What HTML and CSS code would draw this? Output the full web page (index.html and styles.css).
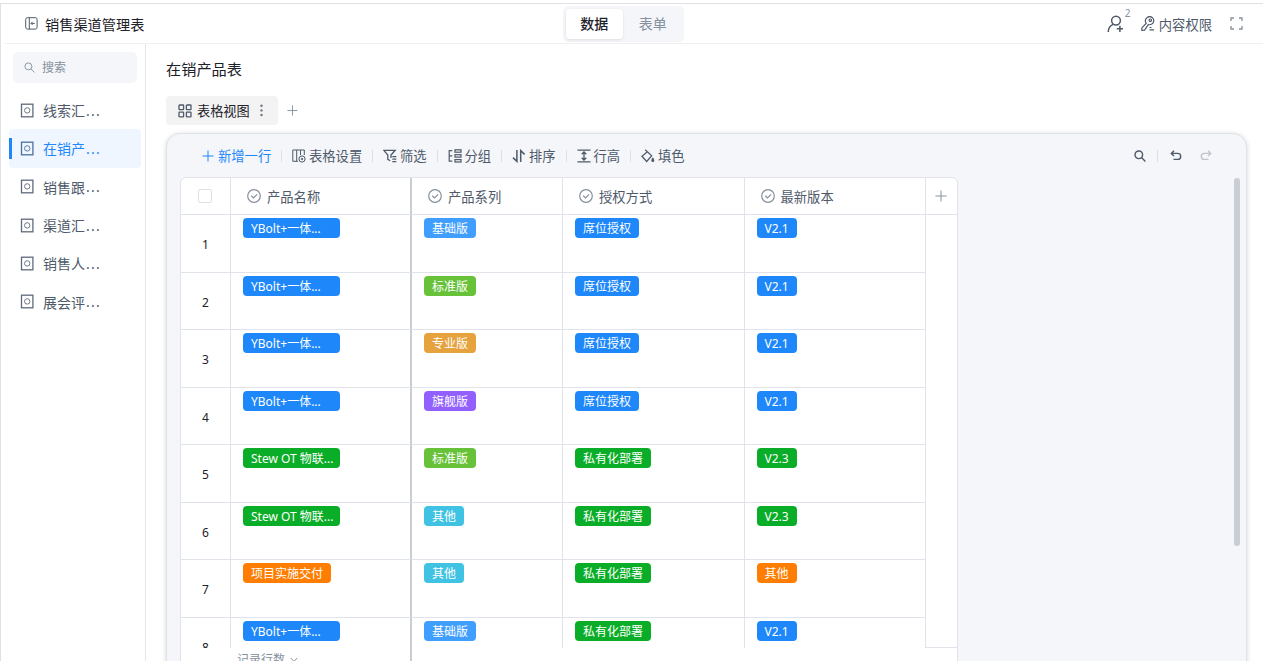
FILE: index.html
```html
<!DOCTYPE html>
<html lang="zh-CN">
<head>
    <meta charset="UTF-8">
    <meta name="viewport" content="width=device-width, initial-scale=1.0">
    <title>销售渠道管理表</title>
    <link rel="stylesheet" href="styles.css">
</head>
<body>

    <!-- Shared icons -->
    <svg class="icon-defs">
        <symbol id="i-form" viewBox="0 0 14 15">
            <rect x="1.5" y="1.2" width="11.4" height="12.6" stroke-width="1.3"/>
            <circle cx="7.2" cy="7.4" r="2.7" stroke-width=".9"/>
        </symbol>
        <symbol id="i-check" viewBox="0 0 14 14">
            <circle cx="7" cy="7" r="6.3" stroke-width="1.2"/>
            <path d="M4.2 6.8l2.3 2.2 3.6-3.7" stroke-width="1.2"/>
        </symbol>
        <symbol id="i-search" viewBox="0 0 12 12">
            <circle cx="4.8" cy="4.8" r="3.8"/>
            <path d="M7.5 7.5l3.9 3.9"/>
        </symbol>
        <symbol id="i-plus" viewBox="0 0 12 12">
            <path d="M6 .5v11M.5 6h11"/>
        </symbol>
    </svg>

    <div class="app">
        <header class="topbar">
            <div class="topbar-left">
                <svg class="icon" width="13" height="13" viewBox="0 0 13 13">
                    <rect x=".7" y=".7" width="11.4" height="11.4" rx="1.8"/>
                    <path d="M4.3 .7v11.4M9.7 6.4H6.2M7.6 4.8L6 6.4l1.6 1.6"/>
                </svg>
                <span class="app-title">销售渠道管理表</span>
            </div>
            <nav class="switch">
                <span class="switch-item active">数据</span>
                <span class="switch-item">表单</span>
            </nav>
            <div class="topbar-right">
                <div class="members">
                    <svg class="icon" width="18" height="18" viewBox="0 0 18 18" stroke-width="1.5">
                        <circle cx="9" cy="5.6" r="4.4"/>
                        <path d="M1.2 17c.2-3.8 2-6.4 5-7.6M12.9 10.7v6.2M9.8 13.8H16"/>
                    </svg>
                    <span class="member-count">2</span>
                </div>
                <svg class="icon" width="14" height="15" viewBox="0 0 14 15" stroke-width="1.2">
                    <path d="M5.2 7.3C3.8 5 4.5 2.6 6.3 1.4c2-1.3 4.5-.7 5.8 1.1 1.2 1.9.6 4.5-1.3 5.6-1.1.7-2.3.8-3.4.4L3.6 14.2.8 14.3l.1-2.4z"/>
                    <circle cx="9.3" cy="4.2" r="1.2"/>
                    <path d="M8.5 11.5h2M8.5 13.9h4.5"/>
                </svg>
                <span class="perm">内容权限</span>
                <svg class="icon muted" width="13" height="13" viewBox="0 0 13 13" stroke-width="1.3">
                    <path d="M1 4V1h3M9 1h3v3M12 9v3H9M4 12H1V9"/>
                </svg>
            </div>
        </header>

        <div class="body">
            <aside class="sidebar">
                <div class="search">
                    <svg class="icon" width="11" height="11"><use href="#i-search"/></svg>
                    <span>搜索</span>
                </div>
                <ul class="menu">
                    <li><svg class="icon" width="14" height="15"><use href="#i-form"/></svg>线索汇<i>...</i></li>
                    <li class="active"><svg class="icon" width="14" height="15"><use href="#i-form"/></svg>在销产<i>...</i></li>
                    <li><svg class="icon" width="14" height="15"><use href="#i-form"/></svg>销售跟<i>...</i></li>
                    <li><svg class="icon" width="14" height="15"><use href="#i-form"/></svg>渠道汇<i>...</i></li>
                    <li><svg class="icon" width="14" height="15"><use href="#i-form"/></svg>销售人<i>...</i></li>
                    <li><svg class="icon" width="14" height="15"><use href="#i-form"/></svg>展会评<i>...</i></li>
                </ul>
            </aside>

            <main class="main">
                <h1>在销产品表</h1>
                <div class="views">
                    <div class="view-tab">
                        <svg class="icon" width="14" height="14" viewBox="0 0 14 14" stroke-width="1.3">
                            <rect x="1" y="1" width="4.6" height="4.6" rx=".6"/>
                            <rect x="8.4" y="1" width="4.6" height="4.6" rx=".6"/>
                            <rect x="1" y="8.2" width="4.6" height="4.6" rx=".6"/>
                            <rect x="8.4" y="8.2" width="4.6" height="4.6" rx=".6"/>
                        </svg>
                        <span>表格视图</span>
                        <svg class="dots" width="3" height="13" viewBox="0 0 3 13">
                            <circle cx="1.5" cy="1.8" r="1.2"/>
                            <circle cx="1.5" cy="6.4" r="1.2"/>
                            <circle cx="1.5" cy="11" r="1.2"/>
                        </svg>
                    </div>
                    <svg class="icon muted" width="11" height="11"><use href="#i-plus"/></svg>
                </div>

                <section class="panel">
                    <div class="toolbar">
                        <div class="tool add">
                            <svg class="icon" width="12" height="12"><use href="#i-plus"/></svg>新增一行
                        </div>
                        <div class="tool settings">
                            <svg class="icon" width="14" height="14" viewBox="0 0 14 14">
                                <path d="M6 12.3H.8V1h11.5v5M4.7 1v11.3M8.5 1v5"/>
                                <circle cx="10" cy="10" r="3.1"/>
                                <circle cx="10" cy="10" r=".8"/>
                            </svg>表格设置
                        </div>
                        <div class="tool filter">
                            <svg class="icon" width="14" height="14" viewBox="0 0 14 14" stroke-width="1.3">
                                <path d="M7.2 11.8L4.8 10.3V6.1L.8 1.3h11.4L8 6.1V9M9.3 7.6h4M9.3 10.1h4M9.3 12.6h4"/>
                            </svg>筛选
                        </div>
                        <div class="tool group">
                            <svg class="icon" width="14" height="14" viewBox="0 0 14 14" stroke-width="1.2">
                                <path d="M4.3 1.6H1.2v10.6h3.1M1.2 6.9h3.1"/>
                                <rect x="7" y=".8" width="6" height="2.4"/>
                                <rect x="7" y="5.7" width="6" height="2.4"/>
                                <rect x="7" y="10.6" width="6" height="2.4"/>
                            </svg>分组
                        </div>
                        <div class="tool sort">
                            <svg class="icon" width="14" height="14" viewBox="0 0 14 14" stroke-width="1.5">
                                <path d="M4.9 1v11.4L1 8.6M8.7 13V1.6l3.9 3.8"/>
                            </svg>排序
                        </div>
                        <div class="tool height">
                            <svg class="icon" width="14" height="14" viewBox="0 0 14 14" stroke-width="1.3">
                                <path d="M.5 1.1h13M.5 12.9h13M7 3.5v7M4.7 5.3L7 3l2.3 2.3M4.7 8.7L7 11l2.3-2.3"/>
                            </svg>行高
                        </div>
                        <div class="tool fill">
                            <svg class="icon" width="14" height="14" viewBox="0 0 14 14" stroke-width="1.2">
                                <path d="M4.2.8l6.5 5.9-5 5.8L.9 7.2 6.4 2.7"/>
                                <path class="solid" d="M11.8 8.3c.9 1.5 1.5 2.4 1.5 3.2a1.5 1.5 0 0 1-3 0c0-.8.6-1.7 1.5-3.2z"/>
                            </svg>填色
                        </div>
                        <div class="actions">
                            <svg class="icon" width="12" height="12" stroke-width="1.4"><use href="#i-search"/></svg>
                            <span class="sep"></span>
                            <svg class="icon" width="12" height="11" viewBox="0 0 12 11" stroke-width="1.4">
                                <path d="M4 .8L1.3 3.4 4 6M1.5 3.4h6.2a3 3 0 0 1 0 6H3.5"/>
                            </svg>
                            <svg class="icon disabled" width="12" height="11" viewBox="0 0 12 11" stroke-width="1.4">
                                <path d="M8 .8l2.7 2.6L8 6M10.5 3.4H4.3a3 3 0 0 0 0 6h4.2"/>
                            </svg>
                        </div>
                    </div>

                    <div class="table">
                        <div class="row head">
                            <div class="cell no"><span class="checkbox"></span></div>
                            <div class="cell name"><svg class="icon" width="14" height="14"><use href="#i-check"/></svg>产品名称</div>
                            <div class="cell"><svg class="icon" width="14" height="14"><use href="#i-check"/></svg>产品系列</div>
                            <div class="cell"><svg class="icon" width="14" height="14"><use href="#i-check"/></svg>授权方式</div>
                            <div class="cell"><svg class="icon" width="14" height="14"><use href="#i-check"/></svg>最新版本</div>
                            <div class="cell plus"><svg class="icon" width="12" height="12"><use href="#i-plus"/></svg></div>
                        </div>
                        <div class="rows">
                            <div class="row">
                                <div class="cell no">1</div>
                                <div class="cell name"><span class="tag wide blue">YBolt+一体...</span></div>
                                <div class="cell"><span class="tag light-blue">基础版</span></div>
                                <div class="cell"><span class="tag blue">席位授权</span></div>
                                <div class="cell"><span class="tag blue">V2.1</span></div>
                                <div class="cell plus"></div>
                            </div>
                            <div class="row">
                                <div class="cell no">2</div>
                                <div class="cell name"><span class="tag wide blue">YBolt+一体...</span></div>
                                <div class="cell"><span class="tag lime">标准版</span></div>
                                <div class="cell"><span class="tag blue">席位授权</span></div>
                                <div class="cell"><span class="tag blue">V2.1</span></div>
                                <div class="cell plus"></div>
                            </div>
                            <div class="row">
                                <div class="cell no">3</div>
                                <div class="cell name"><span class="tag wide blue">YBolt+一体...</span></div>
                                <div class="cell"><span class="tag amber">专业版</span></div>
                                <div class="cell"><span class="tag blue">席位授权</span></div>
                                <div class="cell"><span class="tag blue">V2.1</span></div>
                                <div class="cell plus"></div>
                            </div>
                            <div class="row">
                                <div class="cell no">4</div>
                                <div class="cell name"><span class="tag wide blue">YBolt+一体...</span></div>
                                <div class="cell"><span class="tag purple">旗舰版</span></div>
                                <div class="cell"><span class="tag blue">席位授权</span></div>
                                <div class="cell"><span class="tag blue">V2.1</span></div>
                                <div class="cell plus"></div>
                            </div>
                            <div class="row">
                                <div class="cell no">5</div>
                                <div class="cell name"><span class="tag wide green">Stew OT 物联...</span></div>
                                <div class="cell"><span class="tag lime">标准版</span></div>
                                <div class="cell"><span class="tag green">私有化部署</span></div>
                                <div class="cell"><span class="tag green">V2.3</span></div>
                                <div class="cell plus"></div>
                            </div>
                            <div class="row">
                                <div class="cell no">6</div>
                                <div class="cell name"><span class="tag wide green">Stew OT 物联...</span></div>
                                <div class="cell"><span class="tag cyan">其他</span></div>
                                <div class="cell"><span class="tag green">私有化部署</span></div>
                                <div class="cell"><span class="tag green">V2.3</span></div>
                                <div class="cell plus"></div>
                            </div>
                            <div class="row">
                                <div class="cell no">7</div>
                                <div class="cell name"><span class="tag orange">项目实施交付</span></div>
                                <div class="cell"><span class="tag cyan">其他</span></div>
                                <div class="cell"><span class="tag green">私有化部署</span></div>
                                <div class="cell"><span class="tag orange">其他</span></div>
                                <div class="cell plus"></div>
                            </div>
                            <div class="row">
                                <div class="cell no">8</div>
                                <div class="cell name"><span class="tag wide blue">YBolt+一体...</span></div>
                                <div class="cell"><span class="tag light-blue">基础版</span></div>
                                <div class="cell"><span class="tag green">私有化部署</span></div>
                                <div class="cell"><span class="tag blue">V2.1</span></div>
                                <div class="cell plus"></div>
                            </div>
                        </div>
                        <div class="row foot">
                            <div class="cell no"></div>
                            <div class="cell name">记录行数
                                <svg class="icon" width="8" height="6" viewBox="0 0 8 6"><path d="M.8 1L4 4.5 7.2 1"/></svg>
                            </div>
                            <div class="cell"></div>
                            <div class="cell"></div>
                            <div class="cell"></div>
                            <div class="cell plus"></div>
                        </div>
                    </div>
                    <div class="scrollbar"></div>
                </section>
            </main>
        </div>
    </div>

</body>
</html>
```
FILE: styles.css
```css
/* General Reset */
* {
    margin: 0;
    padding: 0;
    box-sizing: border-box;
}

body {
    font-family: 'Noto Sans', 'Noto Sans CJK SC', sans-serif;
    font-size: 13.3px;
    color: #4e5969;
    background-color: #fff;
    height: 100vh;
    padding-top: 3px;
    overflow: hidden;
}

.icon-defs {
    display: none;
}

.icon {
    fill: none;
    stroke: currentColor;
    flex: none;
}

.icon .solid {
    fill: currentColor;
    stroke: none;
}

.muted {
    color: #86909c;
}

.app {
    height: 658px;
    border-top: 1px solid #e0e1e6;
    border-left: 1px solid #e0e1e6;
    display: flex;
    flex-direction: column;
}

/* Top bar */
.topbar {
    height: 40px;
    flex: none;
    margin-left: 4px;
    border-bottom: 1px solid #eff0f2;
    display: grid;
    grid-template-columns: 560px 119px 1fr;
}

.topbar-left {
    display: flex;
    align-items: center;
    gap: 7px;
    padding-left: 20px;
}

.app-title {
    font-size: 14.2px;
    color: #1d2129;
}

.switch {
    height: 36px;
    margin: 2px 0 0 -2px;
    width: 121px;
    padding: 3px;
    background-color: #f4f6fa;
    border-radius: 5px;
    display: flex;
}

.switch-item {
    width: 57px;
    line-height: 30px;
    font-size: 14px;
    text-align: center;
    color: #86909c;
}

.switch-item.active {
    color: #1d2129;
    font-weight: 500;
    background-color: #fff;
    border-radius: 4px;
    box-shadow: 0 1px 3px rgba(0, 0, 0, 0.1);
    margin-right: 2px;
}

.topbar-right {
    display: flex;
    align-items: center;
    justify-content: flex-end;
    padding-right: 20px;
}

.members {
    display: flex;
    width: 34px;
}

.member-count {
    font-size: 10px;
    line-height: 12px;
    color: #86909c;
    margin-top: -8px;
}

.perm {
    margin: 0 18px 0 4px;
    padding-top: 1px;
}

.body {
    display: flex;
    flex: 1;
    min-height: 0;
}

/* Sidebar */
.sidebar {
    width: 145px;
    flex: none;
    border-right: 1px solid #e5e6eb;
    padding: 8px 4px 0 8px;
}

.search {
    height: 31px;
    width: 124px;
    margin-left: 4px;
    padding: 0 0 1px 11px;
    background-color: #f4f6fa;
    border-radius: 5px;
    display: flex;
    align-items: center;
    gap: 7px;
    font-size: 12px;
    color: #86909c;
}

.menu {
    list-style: none;
    margin-top: 8px;
}

.menu li {
    height: 38.3px;
    display: flex;
    align-items: center;
    padding-left: 11px;
    font-size: 14px;
    border-radius: 4px;
}

.menu i {
    font-style: normal;
    letter-spacing: 1.2px;
    margin-left: 1px;
}

.menu .icon {
    margin-right: 9px;
    color: #5f6b7c;
}

.menu .active {
    color: #1e87fa;
    background: linear-gradient(#1e87fa, #1e87fa) 0 50% / 3px 21px no-repeat #eff6ff;
}

.menu .active .icon {
    color: #4a709e;
}

/* Main area */
.main {
    flex: 1;
    padding: 13px 16px 0 20px;
    display: flex;
    flex-direction: column;
    min-width: 0;
    overflow: hidden;
}

h1 {
    font-size: 15.2px;
    font-weight: 400;
    line-height: 24px;
    color: #1d2129;
}

.views {
    display: flex;
    align-items: center;
    gap: 9px;
    margin: 15px 0 8px;
}

.view-tab {
    height: 29px;
    width: 112px;
    padding-left: 12px;
    background-color: #f3f3f3;
    border-radius: 4px;
    display: flex;
    align-items: center;
    font-size: 13.2px;
    color: #1d2129;
}

.view-tab .icon {
    color: #4e5969;
    margin-right: 5px;
}

.dots {
    fill: #6b7583;
    margin-left: 10px;
}

.panel {
    position: relative;
    height: 560px;
    flex: none;
    padding: 0 13px;
    background-color: #f4f6fa;
    border: 1px solid #dfe2e8;
    border-radius: 14px;
    box-shadow: 0 1px 5px rgba(0, 0, 0, 0.16);
}

/* Toolbar */
.toolbar {
    height: 43px;
    display: flex;
    align-items: center;
    padding-left: 22px;
}

.tool {
    display: flex;
    align-items: center;
    gap: 3px;
    white-space: nowrap;
}

.tool + .tool::before {
    content: '';
    width: 1px;
    height: 12px;
    margin-right: 7px;
    background-color: #dcdfe5;
}

.add {
    width: 79px;
    gap: 4px;
    color: #1e87fa;
}

.settings {
    width: 91px;
}

.filter,
.group,
.sort,
.height {
    width: 64.5px;
}

.actions {
    display: flex;
    align-items: center;
    margin-left: auto;
    padding-right: 21.5px;
}

.sep {
    width: 1px;
    height: 12px;
    margin: 0 12px 0 11px;
    background-color: #dcdfe5;
}

.disabled {
    color: #c0c4cc;
    margin-left: 18px;
}

/* Table */
.table {
    width: 778px;
    height: 520px;
    background-color: #fff;
    border: 1px solid #e0e3ea;
    border-radius: 6px;
}

.row {
    display: grid;
    grid-template-columns: 50px 181px 151px 181.5px 181.5px 31px;
    height: 57.5px;
}

.cell {
    padding: 3px 12px 0;
    border-right: 1px solid #e0e3ea;
    border-bottom: 1px solid #e0e3ea;
}

.cell.no {
    padding: 3px 0 0;
    display: flex;
    align-items: center;
    justify-content: center;
    font-size: 12px;
    color: #1d2129;
}

.cell.name {
    border-right: 2px solid #c9cdd4;
}

.cell.plus {
    border-right: none;
    border-bottom: none;
}

.head {
    height: 37px;
}

.head .cell {
    display: flex;
    align-items: center;
    gap: 6px;
    padding: 0 16px;
    border-bottom: 1px solid #e0e3ea;
}

.head .cell.no {
    padding: 0 1px 0 0;
}

.head .cell .icon {
    color: #86909c;
}

.head .cell.plus {
    padding: 0 1px 0 0;
    justify-content: center;
}

.checkbox {
    width: 14px;
    height: 14px;
    border: 1px solid #dcdfe6;
    border-radius: 2px;
}

.rows {
    height: 433px;
    overflow: hidden;
    background: linear-gradient(#e0e3ea, #e0e3ea) 100% 100% / 31px 1px no-repeat;
}

.foot .cell {
    padding: 2px 6px;
    border-color: transparent;
    font-size: 12px;
    color: #86909c;
}

.foot .cell.name {
    display: flex;
    gap: 5px;
    border-right-color: #c9cdd4;
}

.foot .icon {
    margin-top: 7px;
}

.tag {
    display: block;
    width: fit-content;
    height: 20px;
    padding: 0 8px;
    border-radius: 4px;
    font-size: 12px;
    line-height: 21px;
    color: #fff;
    white-space: nowrap;
}

.tag.wide {
    width: 97px;
}

.blue {
    background-color: #1e87fa;
}

.light-blue {
    background-color: #409eff;
}

.green {
    background-color: #0aad27;
}

.lime {
    background-color: #67c23a;
}

.amber {
    background-color: #e6a23c;
}

.purple {
    background-color: #9260ff;
}

.cyan {
    background-color: #40c2e3;
}

.orange {
    background-color: #ff7d00;
}

.scrollbar {
    position: absolute;
    top: 44px;
    right: 6px;
    width: 6px;
    height: 368px;
    border-radius: 3px;
    background-color: #c9cdd4;
}
```
